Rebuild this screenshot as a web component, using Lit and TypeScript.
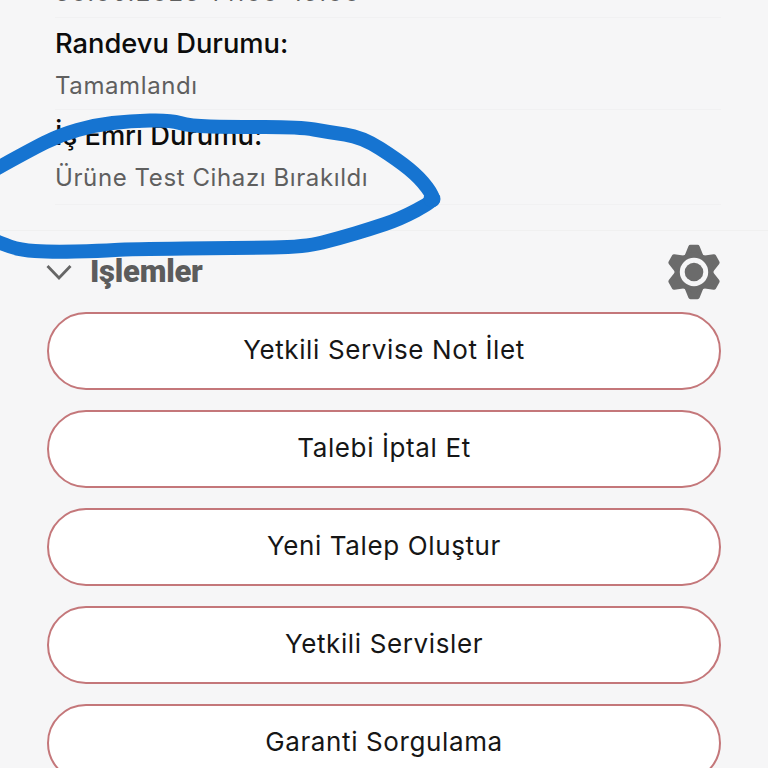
import { LitElement, html, css, svg } from "lit";
import { customElement } from "lit/decorators.js";

const FIELDS = [
  { label: "Randevu Tarihi:", value: "30.06.2023 14:00-15:00", wide: true },
  { label: "Randevu Durumu:", value: "Tamamlandı", wide: false },
  { label: "İş Emri Durumu:", value: "Ürüne Test Cihazı Bırakıldı", wide: false },
];
const ACTIONS = ["Yetkili Servise Not İlet", "Talebi İptal Et", "Yeni Talep Oluştur", "Yetkili Servisler", "Garanti Sorgulama"];

const INK: [number, number][] = [
  [-6, 170], [30, 150], [60, 135], [95, 125], [130, 121], [170, 120], [190, 126], [230, 127], [300, 127], [328, 132],
  [362, 137], [398, 160], [420, 178], [434, 197], [432, 202], [400, 219], [370, 229], [340, 238], [305, 247],
  [240, 248], [130, 249], [100, 251], [50, 252], [20, 250], [0, 243], [-6, 240],
];

function smooth(points: [number, number][]): string {
  let d = `M${points[0][0]} ${points[0][1]}`;
  for (let i = 1; i < points.length - 1; i++) {
    const [x, y] = points[i];
    const [nx, ny] = points[i + 1];
    d += ` Q${x} ${y} ${(x + nx) / 2} ${(y + ny) / 2}`;
  }
  const last = points[points.length - 1];
  return d + ` L${last[0]} ${last[1]}`;
}

@customElement("app-root")
export class AppRoot extends LitElement {
  static styles = css`
    :host { display: block; position: relative; width: 768px; height: 768px; overflow: hidden; background: #f6f6f7; font-family: Inter, "Liberation Sans", sans-serif; }
    .page { display: flex; flex-direction: column; margin-top: -75px; }
    .details { display: flex; flex-direction: column; padding: 0 47px 0 55px; }
    .field { display: flex; flex-direction: column; height: 92.5px; padding-top: 8px; box-sizing: border-box; border-bottom: 1px solid #f1f1f2; }
    .field:last-child { height: 95px; }
    .label { font-size: 27.3px; line-height: 36px; font-weight: 500; color: #0c0c0c; }
    .value { font-size: 24px; line-height: 36px; margin-top: 6px; font-weight: 400; color: #5f5f5f; letter-spacing: 0.6px; }
    .value.wide { letter-spacing: 1.5px; }
    .sep { height: 25px; border-bottom: 1px solid #f0f0f0; }
    .head { display: flex; align-items: center; height: 81px; padding: 0 45px 0 46px; }
    .head .chev { width: 26px; height: 16px; margin-right: 18px; }
    .head .title { flex: 1; font-family: Roboto, sans-serif; font-size: 31px; font-weight: 900; color: #5c5c5c; letter-spacing: -0.25px; }
    .head .gear { width: 58px; height: 58px; }
    .actions { display: flex; flex-direction: column; gap: 20px; padding: 0 47px; }
    .btn { display: flex; align-items: center; justify-content: center; height: 78px; box-sizing: border-box; padding-bottom: 4px; border: 2px solid #c4777a; border-radius: 39px; background: #fff; font-size: 26px; color: #161616; letter-spacing: 0.62px; }
    .ink { position: absolute; left: 0; top: 0; width: 768px; height: 768px; pointer-events: none; }
  `;

  private gear() {
    const lobes = [0, 60, 120, 180, 240, 300];
    return html`<svg class="gear" viewBox="0 0 58 58">
      ${lobes.map((a) => svg`<path d="M21.5 14 L25.5 4 H32.5 L36.5 14 Z" fill="#6b6b6b" stroke="#6b6b6b" stroke-width="4.5" stroke-linejoin="round" transform="rotate(${a} 29 29)"></path>`)}
      <circle cx="29" cy="29" r="19.5" fill="#6b6b6b"></circle>
      <circle cx="29" cy="29" r="14.2" fill="#f6f6f7"></circle>
      <circle cx="29" cy="29" r="9.3" fill="#6b6b6b"></circle>
    </svg>`;
  }

  render() {
    return html`
      <div class="page">
        <div class="details">
          ${FIELDS.map((f) => html`<div class="field"><div class="label">${f.label}</div><div class="value ${f.wide ? "wide" : ""}">${f.value}</div></div>`)}
        </div>
        <div class="sep"></div>
        <div class="head">
          <svg class="chev" viewBox="0 0 26 16"><path d="M1.5 2 L13 14 L24.5 2" fill="none" stroke="#666" stroke-width="2.8"></path></svg>
          <div class="title">İşlemler</div>
          ${this.gear()}
        </div>
        <div class="actions">
          ${ACTIONS.map((a) => html`<div class="btn">${a}</div>`)}
        </div>
      </div>
      <svg class="ink" viewBox="0 0 768 768">
        <path d="${smooth(INK)}" fill="none" stroke="#1674d1" stroke-width="14" stroke-linejoin="round" stroke-linecap="round"></path>
        <circle cx="432" cy="199" r="8.5" fill="#1674d1"></circle>
      </svg>
    `;
  }
}
